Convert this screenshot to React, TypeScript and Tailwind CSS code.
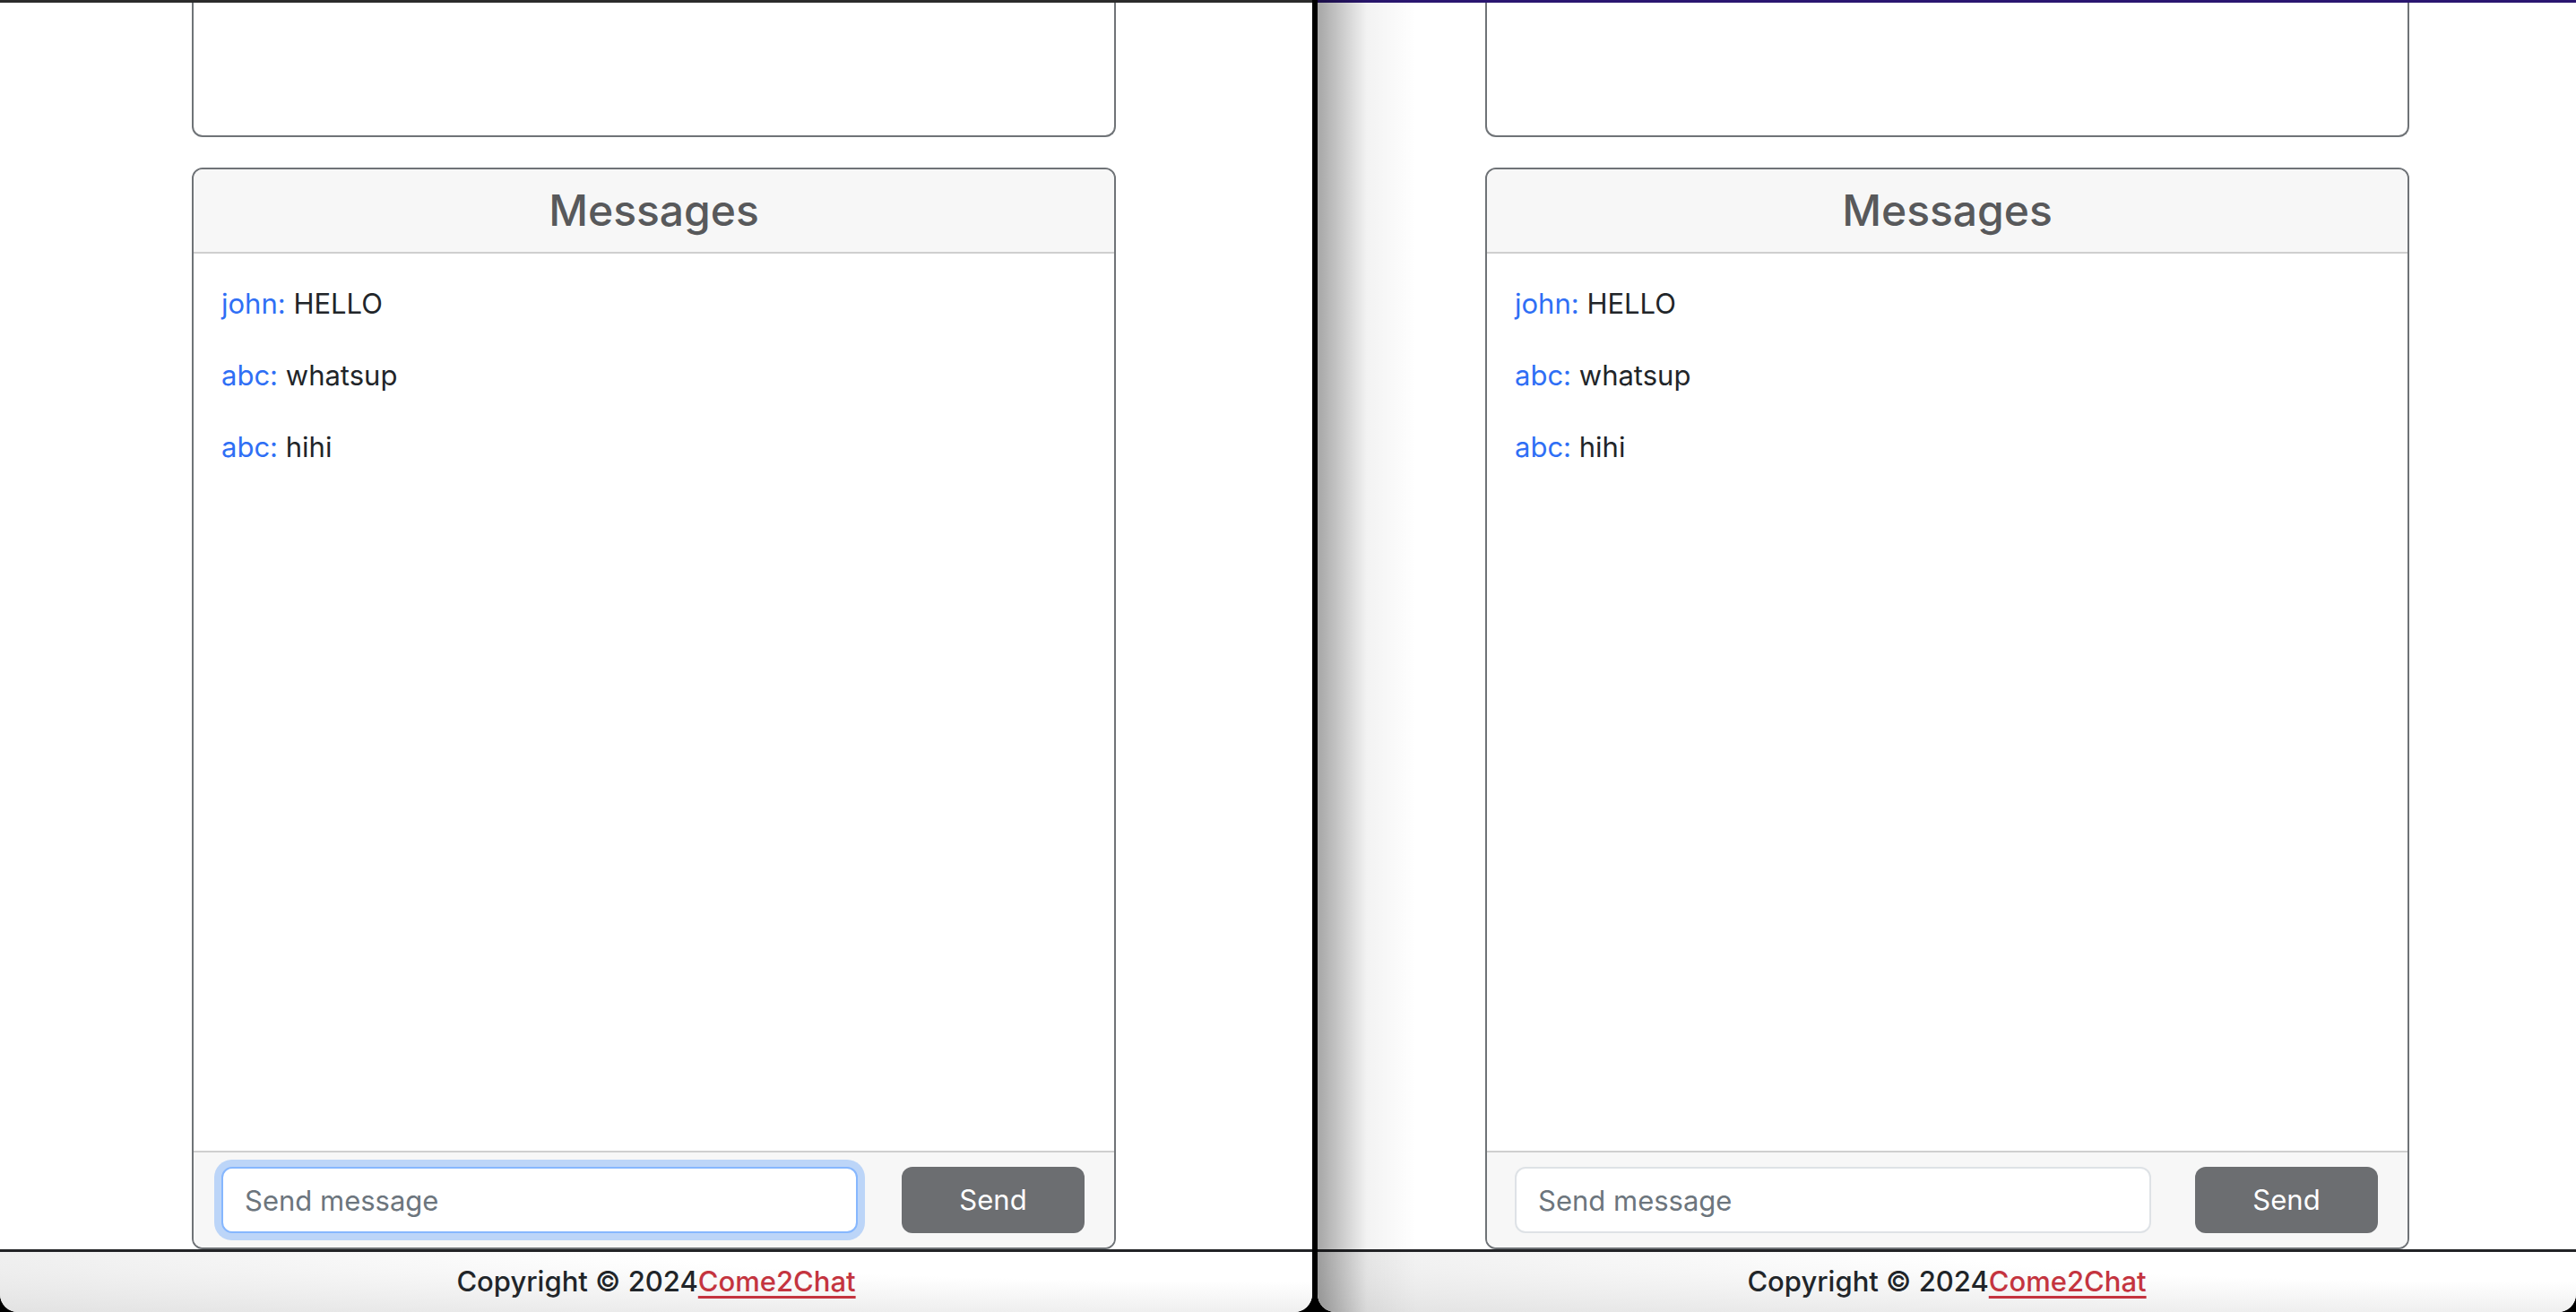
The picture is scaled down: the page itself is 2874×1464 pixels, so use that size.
import React from "react";

type Msg = { user: string; text: string };

const messages: Msg[] = [
  { user: "john", text: "HELLO" },
  { user: "abc", text: "whatsup" },
  { user: "abc", text: "hihi" },
];

function ChatWindow({
  barColor,
  offset,
  width,
  focused,
  shaded,
}: {
  barColor: string;
  offset: string;
  width: string;
  focused: boolean;
  shaded: boolean;
}) {
  return (
    <div className={`relative flex flex-col h-full bg-white rounded-b-[20px] overflow-hidden ${width}`}>
      <div className={`h-[3px] shrink-0 ${barColor}`} />

      {/* page body */}
      <div className={`flex-1 flex flex-col ${offset}`}>
        {/* card above, scrolled out of view */}
        <div className="w-[1031px] h-[150px] border-x-2 border-b-2 border-[#6f7377] rounded-b-[12px]" />

        {/* messages card */}
        <div className="mt-[34px] w-[1031px] flex-1 flex flex-col border-2 border-[#6f7377] rounded-[12px] overflow-hidden">
          <div className="h-[94px] shrink-0 flex items-center justify-center bg-[#f7f7f7] border-b-2 border-[#cfcfcf]">
            <h3 className="text-[48px] leading-none font-medium text-[#58595b]">Messages</h3>
          </div>
          <div className="flex-1 px-[31px] pt-[32px]">
            {messages.map((m, i) => (
              <p key={i} className="text-[31px] leading-[48px] mb-[32px] text-[#212529]">
                <span className="text-[#2f6ff5]">{m.user}:</span> {m.text}
              </p>
            ))}
          </div>
          <div className="shrink-0 flex items-center gap-[49px] bg-[#f7f7f7] border-t-2 border-[#cfcfcf] px-[31px] pt-[16px] pb-[16px]">
            <input
              readOnly
              placeholder="Send message"
              className={`w-[710px] h-[74px] rounded-[12px] border-2 bg-white px-[24px] text-[31px] outline-none placeholder:text-[#6c757d] ${
                focused
                  ? "border-[#86b7fe] shadow-[0_0_0_8px_rgba(13,110,253,0.25)]"
                  : "border-[#dee2e6]"
              }`}
            />
            <button className="w-[204px] h-[74px] rounded-[12px] bg-[#6c6e71] text-white text-[31px]">
              Send
            </button>
          </div>
        </div>
      </div>

      {/* footer */}
      <div className="h-[70px] shrink-0 border-t-[3px] border-[#222326] flex items-center justify-center bg-[radial-gradient(ellipse_at_top_right,#ffffff_35%,#e2e2e2_100%)]">
        <p className="text-[31px] font-medium text-[#212529]">
          Copyright © 2024
          <a href="#" className="text-[#c4343f] underline underline-offset-[5px]">
            Come2Chat
          </a>
        </p>
      </div>

      {shaded && (
        <div className="pointer-events-none absolute inset-y-0 left-0 w-[110px] bg-gradient-to-r from-black/35 via-black/5 to-transparent" />
      )}
    </div>
  );
}

export default function App() {
  return (
    <div
      className="w-[2874px] h-[1464px] bg-black flex gap-[6px] overflow-hidden"
      style={{ fontFamily: "Inter, 'Liberation Sans', sans-serif" }}
    >
      <ChatWindow barColor="bg-[#2b2b2b]" offset="pl-[214px]" width="w-[1464px]" focused shaded={false} />
      <ChatWindow barColor="bg-[#2a1670]" offset="pl-[187px]" width="w-[1404px]" focused={false} shaded />
    </div>
  );
}
